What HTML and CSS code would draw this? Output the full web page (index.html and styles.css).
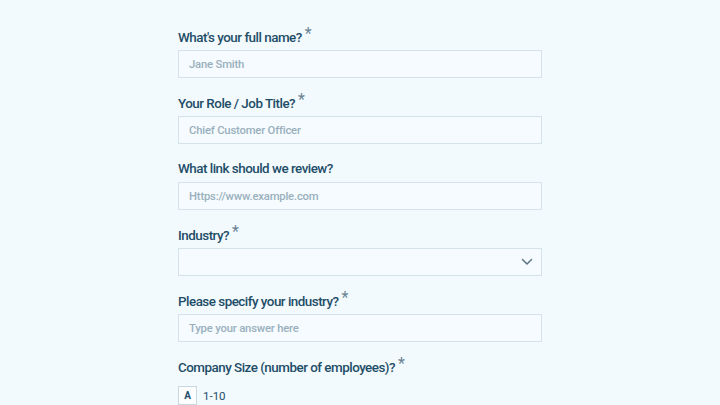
FILE: index.html
```html
<!DOCTYPE html>
<html>
<head>
<meta charset="utf-8">
<link rel="stylesheet" href="styles.css">
</head>
<body>
<form class="form">
  <div class="field">
    <label class="label">What's your full name?<span class="req">*</span></label>
    <div class="input placeholder">Jane Smith</div>
  </div>
  <div class="field">
    <label class="label">Your Role / Job Title?<span class="req">*</span></label>
    <div class="input placeholder">Chief Customer Officer</div>
  </div>
  <div class="field">
    <label class="label">What link should we review?</label>
    <div class="input placeholder">Https://www.example.com</div>
  </div>
  <div class="field">
    <label class="label">Industry?<span class="req">*</span></label>
    <div class="input select">
      <svg class="chev" width="12" height="8" viewBox="0 0 12 8"><path d="M1.5 1.5 L6 6 L10.5 1.5" fill="none" stroke="#5d7482" stroke-width="1.5" stroke-linecap="round" stroke-linejoin="round"/></svg>
    </div>
  </div>
  <div class="field">
    <label class="label">Please specify your industry?<span class="req">*</span></label>
    <div class="input placeholder">Type your answer here</div>
  </div>
  <div class="field last">
    <label class="label">Company Size (number of employees)?<span class="req">*</span></label>
    <div class="choice"><span class="key">A</span><span class="opt">1-10</span></div>
  </div>
</form>
</body>
</html>
```
FILE: styles.css
```css
html, body {
  margin: 0;
  padding: 0;
  background: #f3fafd;
  font-family: Roboto, "Noto Sans", Arial, sans-serif;
  overflow: hidden;
}
.form {
  width: 364px;
  margin-left: 178px;
  padding-top: 28px;
  display: flex;
  flex-direction: column;
}
.field {
  display: flex;
  flex-direction: column;
  margin-bottom: 16px;
}
.label {
  height: 18px;
  line-height: 18px;
  font-size: 13.4px;
  font-weight: 500;
  letter-spacing: -0.5px;
  color: #1e4d68;
  margin-bottom: 4px;
}
.req {
  color: #6a8494;
  font-size: 16px;
  font-weight: 400;
  margin-left: 3px;
  position: relative;
  top: -3px;
}
.input {
  box-sizing: border-box;
  height: 28px;
  border: 1px solid #d5e3ea;
  background: #f5fbfe;
  display: flex;
  align-items: center;
  padding-left: 10px;
  font-size: 11.3px;
  font-weight: 500;
  letter-spacing: -0.2px;
}
.placeholder {
  color: #9ab0bd;
}
.select {
  justify-content: flex-end;
  padding-right: 8px;
}
.last .label {
  margin-bottom: 10px;
}
.choice {
  display: flex;
  align-items: center;
  gap: 6px;
}
.key {
  box-sizing: border-box;
  width: 19px;
  height: 19px;
  border: 1px solid #c9d9e1;
  background: #fbfdfe;
  display: flex;
  align-items: center;
  justify-content: center;
  font-size: 10px;
  font-weight: 700;
  color: #1e4d68;
}
.opt {
  font-size: 11.5px;
  color: #1e4d68;
}
```
